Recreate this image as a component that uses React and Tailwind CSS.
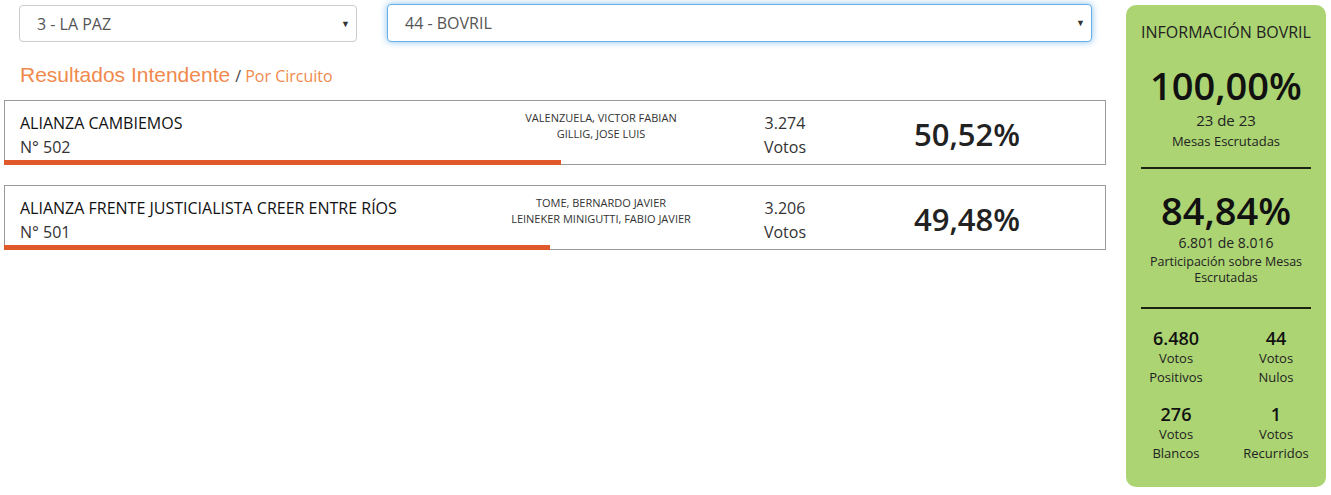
import React from 'react';

const partidos = [
  {
    nombre: 'ALIANZA CAMBIEMOS',
    numero: 'N° 502',
    candidatos: ['VALENZUELA, VICTOR FABIAN', 'GILLIG, JOSE LUIS'],
    votos: '3.274',
    porcentaje: '50,52%',
    barra: 557,
  },
  {
    nombre: 'ALIANZA FRENTE JUSTICIALISTA CREER ENTRE RÍOS',
    numero: 'N° 501',
    candidatos: ['TOME, BERNARDO JAVIER', 'LEINEKER MINIGUTTI, FABIO JAVIER'],
    votos: '3.206',
    porcentaje: '49,48%',
    barra: 546,
  },
];

const totales = [
  { valor: '6.480', a: 'Votos', b: 'Positivos' },
  { valor: '44', a: 'Votos', b: 'Nulos' },
  { valor: '276', a: 'Votos', b: 'Blancos' },
  { valor: '1', a: 'Votos', b: 'Recurridos' },
];

function Select({ label, focused, className }) {
  return (
    <div
      className={`flex items-center justify-between bg-white rounded-[4px] border pl-[17px] pr-[6px] text-[16px] text-[#555] ${
        focused
          ? 'border-[#66afe9] shadow-[0_0_7px_rgba(102,175,233,0.8)] h-[38px]'
          : 'border-[#ccc] h-[37px]'
      } ${className}`}
    >
      <span>{label}</span>
      <span className="text-[9px] text-[#333]">▼</span>
    </div>
  );
}

function PartidoCard({ p }) {
  return (
    <div className="relative h-[65px] border border-[#999] bg-white flex items-start">
      <div className="w-[496px] pl-[15px] pt-[10px] text-[16px] leading-[24px] text-[#333]">
        <div className="text-[#111]">{p.nombre}</div>
        <div>{p.numero}</div>
      </div>
      <div className="w-[200px] pt-[9px] text-center text-[11px] leading-[16px] text-[#333]">
        {p.candidatos.map((c) => (
          <div key={c}>{c}</div>
        ))}
      </div>
      <div className="w-[168px] pt-[10px] text-center text-[16px] leading-[24px] text-[#333]">
        <div>{p.votos}</div>
        <div>Votos</div>
      </div>
      <div className="w-[196px] pt-[11px] text-center text-[31px] leading-[44px] font-semibold text-[#222]">
        {p.porcentaje}
      </div>
      <div
        className="absolute left-[-1px] bottom-[-1px] h-[5px] bg-[#e0592a]"
        style={{ width: p.barra }}
      />
    </div>
  );
}

export default function App() {
  return (
    <div className="flex w-[1331px] h-[495px] bg-white font-['Open_Sans',sans-serif]">
      <div className="w-[1106px] pl-[4px] pt-[5px]">
        <div className="flex">
          <Select label="3 - LA PAZ" className="ml-[15px] w-[338px]" />
          <Select label="44 - BOVRIL" focused className="ml-[30px] -mt-[1px] w-[705px]" />
        </div>
        <div className="mt-[18px] ml-[16px] flex items-baseline leading-[30px] text-[#f0894d]">
          <span className="font-['Liberation_Sans',Arial,sans-serif] text-[21px]">
            Resultados Intendente
          </span>
          <span className="ml-[5px] text-[16px]">
            <span className="text-[#444]">/</span> Por Circuito
          </span>
        </div>
        <div className="mt-[9px] flex flex-col gap-[20px]">
          {partidos.map((p) => (
            <PartidoCard key={p.numero} p={p} />
          ))}
        </div>
      </div>

      <div className="ml-[20px] mt-[5px] w-[200px] h-[482px] rounded-[10px] bg-[#acd473] text-[#111] text-center px-[15px]">
        <div className="pt-[15px] text-[16px] leading-[24px] text-[#222]">INFORMACIÓN BOVRIL</div>
        <div className="mt-[19px] text-[38px] leading-[44px] font-semibold">100,00%</div>
        <div className="mt-[2px] text-[15px] leading-[22px] text-[#222]">23 de 23</div>
        <div className="text-[13px] leading-[20px] text-[#222]">Mesas Escrutadas</div>
        <div className="mt-[16px] h-[2px] bg-[#1a2410]" />
        <div className="mt-[19px] text-[38px] leading-[44px] font-semibold">84,84%</div>
        <div className="mt-[2px] text-[14px] leading-[18px] text-[#222]">6.801 de 8.016</div>
        <div className="mt-[2px] text-[12.5px] leading-[16px] text-[#222]">
          Participación sobre Mesas
          <br />
          Escrutadas
        </div>
        <div className="mt-[21px] h-[2px] bg-[#1a2410]" />
        <div className="mt-[18px] grid grid-cols-2 gap-y-[16px] -mx-[15px]">
          {totales.map((t) => (
            <div key={t.b} className="flex flex-col items-center">
              <div className="text-[18px] leading-[22px] font-semibold">{t.valor}</div>
              <div className="text-[13px] leading-[19px] text-[#222]">{t.a}</div>
              <div className="text-[13px] leading-[19px] text-[#222]">{t.b}</div>
            </div>
          ))}
        </div>
      </div>
    </div>
  );
}
